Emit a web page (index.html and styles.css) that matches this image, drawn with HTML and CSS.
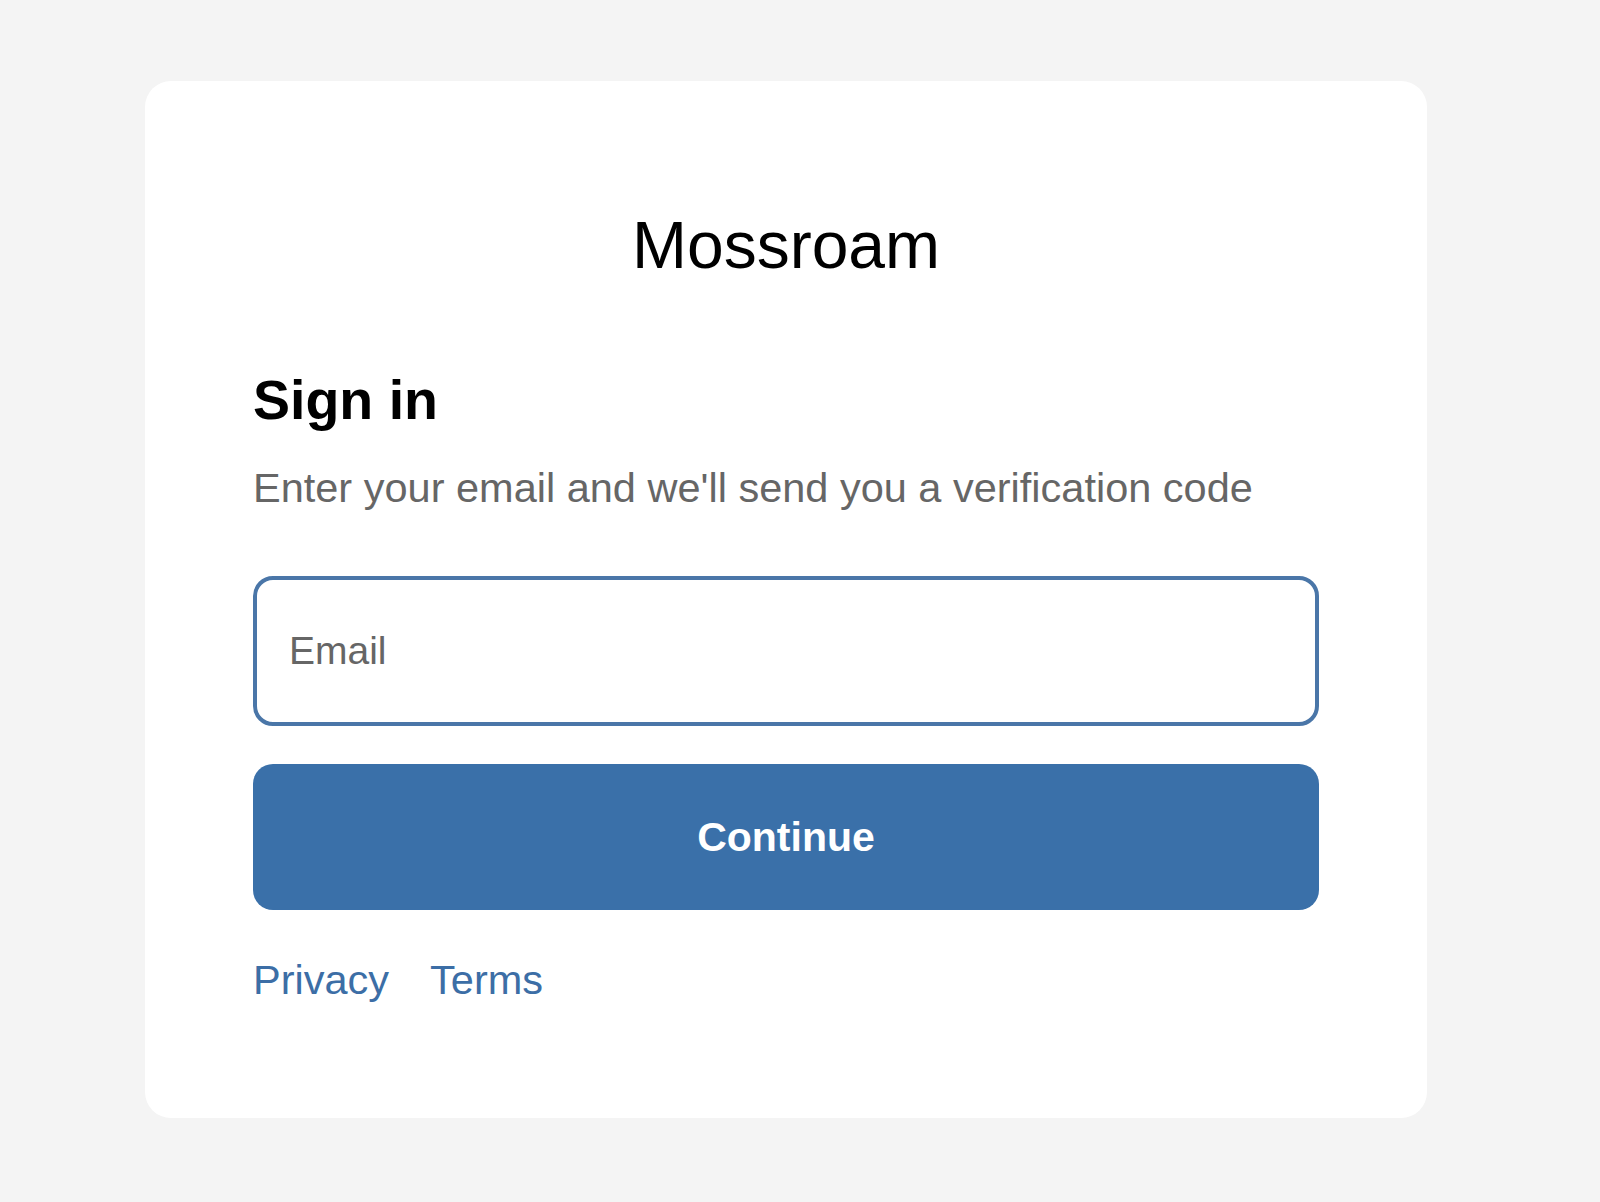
FILE: index.html
```html
<!DOCTYPE html>
<html lang="en">
<head>
  <meta charset="UTF-8" />
  <title>Mossroam - Sign in</title>
  <link rel="stylesheet" href="styles.css">
</head>
<body>
  <div class="page">
    <div class="card">
      <div class="brand">Mossroam</div>

      <h1 class="title">Sign in</h1>
      <p class="subtitle">Enter your email and we'll send you a verification code</p>

      <form class="signinForm">
        <input class="emailInput" type="email" placeholder="Email" />
        <button class="continueBtn" type="submit">Continue</button>
      </form>

      <div class="links">
        <a href="#">Privacy</a>
        <a href="#">Terms</a>
      </div>
    </div>
  </div>
</body>
</html>
```

FILE: styles.css
```css
body {
  margin: 0;
  background: #f4f4f4;
  font-family: 'Liberation Sans', Arial, sans-serif;
  color: #000;
}
.page {
  padding: 81px 0 84px 145px;
}
.card {
  box-sizing: border-box;
  width: 1282px;
  height: 1037px;
  background: #fff;
  border-radius: 26px;
  padding: 124px 108px 0 108px;
}
.brand {
  text-align: center;
  font-size: 66px;
  line-height: 80px;
  color: #000;
}
.title {
  margin: 81px 0 0 0;
  font-size: 55.5px;
  line-height: 68px;
  font-weight: bold;
}
.subtitle {
  margin: 29px 0 0 0;
  font-size: 41.5px;
  line-height: 50px;
  color: #666;
}
.signinForm {
  margin-top: 63px;
  display: flex;
  flex-direction: column;
  gap: 38px;
}
.emailInput {
  box-sizing: border-box;
  height: 150px;
  width: 100%;
  padding: 0 32px;
  border: 4px solid #4a76a8;
  border-radius: 20px;
  font-family: inherit;
  font-size: 39px;
  color: #333;
  outline: none;
}
.emailInput::placeholder {
  color: #666;
}
.continueBtn {
  height: 146px;
  width: 100%;
  border: none;
  border-radius: 20px;
  background: #3a70a9;
  color: #fff;
  font-family: inherit;
  font-size: 41px;
  font-weight: bold;
  cursor: pointer;
}
.links {
  margin-top: 46px;
  display: flex;
  gap: 41px;
  font-size: 41.5px;
  line-height: 48px;
}
.links a {
  color: #3c6ea6;
  text-decoration: none;
}
```
